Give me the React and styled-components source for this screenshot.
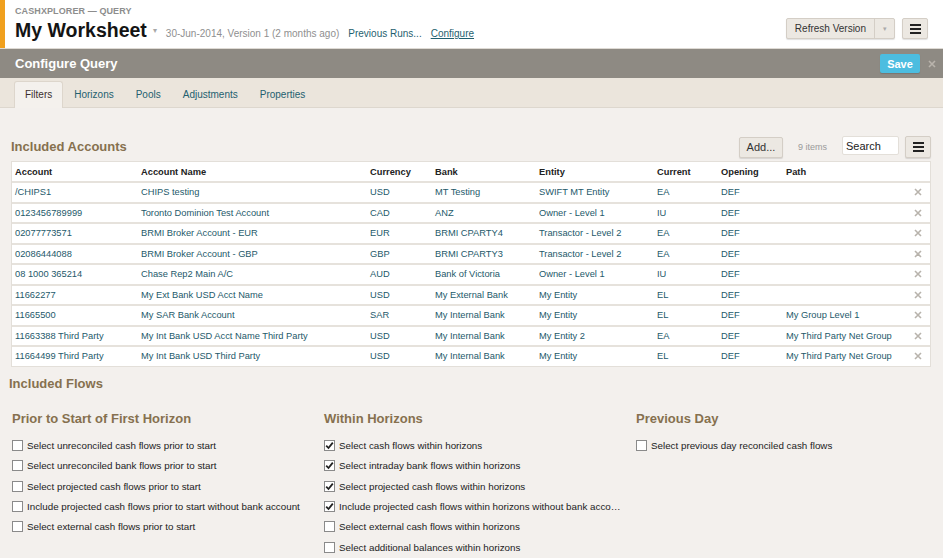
import styled, { createGlobalStyle } from 'styled-components'

const GlobalStyle = createGlobalStyle`
	html, body {
		margin: 0;
		padding: 0;
		background: #f3f0ed;
		font-family: "Liberation Sans", Arial, sans-serif;
		color: #333;
	}
	* { box-sizing: border-box; }
`

const accounts = [
	['/CHIPS1', 'CHIPS testing', 'USD', 'MT Testing', 'SWIFT MT Entity', 'EA', 'DEF', ''],
	['0123456789999', 'Toronto Dominion Test Account', 'CAD', 'ANZ', 'Owner - Level 1', 'IU', 'DEF', ''],
	['02077773571', 'BRMI Broker Account - EUR', 'EUR', 'BRMI CPARTY4', 'Transactor - Level 2', 'EA', 'DEF', ''],
	['02086444088', 'BRMI Broker Account - GBP', 'GBP', 'BRMI CPARTY3', 'Transactor - Level 2', 'EA', 'DEF', ''],
	['08 1000 365214', 'Chase Rep2 Main A/C', 'AUD', 'Bank of Victoria', 'Owner - Level 1', 'IU', 'DEF', ''],
	['11662277', 'My Ext Bank USD Acct Name', 'USD', 'My External Bank', 'My Entity', 'EL', 'DEF', ''],
	['11665500', 'My SAR Bank Account', 'SAR', 'My Internal Bank', 'My Entity', 'EL', 'DEF', 'My Group Level 1'],
	['11663388 Third Party', 'My Int Bank USD Acct Name Third Party', 'USD', 'My Internal Bank', 'My Entity 2', 'EA', 'DEF', 'My Third Party Net Group'],
	['11664499 Third Party', 'My Int Bank USD Third Party', 'USD', 'My Internal Bank', 'My Entity', 'EL', 'DEF', 'My Third Party Net Group'],
]

const columns = ['Account', 'Account Name', 'Currency', 'Bank', 'Entity', 'Current', 'Opening', 'Path']
const colTemplate = '126px 229px 65px 104px 118px 64px 65px 1fr 20px'

const flowGroups = [
	{
		title: 'Prior to Start of First Horizon',
		items: [
			['Select unreconciled cash flows prior to start', false],
			['Select unreconciled bank flows prior to start', false],
			['Select projected cash flows prior to start', false],
			['Include projected cash flows prior to start without bank account', false],
			['Select external cash flows prior to start', false],
		],
	},
	{
		title: 'Within Horizons',
		items: [
			['Select cash flows within horizons', true],
			['Select intraday bank flows within horizons', true],
			['Select projected cash flows within horizons', true],
			['Include projected cash flows within horizons without bank acco…', true],
			['Select external cash flows within horizons', false],
			['Select additional balances within horizons', false],
		],
	},
	{
		title: 'Previous Day',
		items: [['Select previous day reconciled cash flows', false]],
	},
]

const tabs = ['Filters', 'Horizons', 'Pools', 'Adjustments', 'Properties']

function Hamburger () {
	return (
		<svg width='11' height='10' viewBox='0 0 11 10'>
			<rect x='0' y='0' width='11' height='2' fill='#222' />
			<rect x='0' y='4' width='11' height='2' fill='#222' />
			<rect x='0' y='8' width='11' height='2' fill='#222' />
		</svg>
	)
}

function Cross ({ size = 8, color = '#b8b3ac' }) {
	return (
		<svg width={size} height={size} viewBox='0 0 8 8'>
			<path d='M1 1 L7 7 M7 1 L1 7' stroke={color} strokeWidth='1.6' />
		</svg>
	)
}

export default function App () {
	return (
		<>
			<GlobalStyle />
			<Page>
				<Header>
					<Stripe />
					<HeaderMain>
						<AppLabel>CASHXPLORER — QUERY</AppLabel>
						<TitleLine>
							<Title>My Worksheet</Title>
							<Caret>▾</Caret>
							<VersionInfo>30-Jun-2014, Version 1 (2 months ago)</VersionInfo>
							<HeaderLink>Previous Runs...</HeaderLink>
							<HeaderLink $underline>Configure</HeaderLink>
						</TitleLine>
					</HeaderMain>
					<HeaderActions>
						<SplitButton>
							<SplitMain>Refresh Version</SplitMain>
							<SplitCaret>▾</SplitCaret>
						</SplitButton>
						<IconButton><Hamburger /></IconButton>
					</HeaderActions>
				</Header>

				<ConfigBar>
					<ConfigTitle>Configure Query</ConfigTitle>
					<SaveButton>Save</SaveButton>
					<CloseButton><Cross size={8} color='#b9b4ac' /></CloseButton>
				</ConfigBar>

				<TabBar>
					{tabs.map((t, i) => <Tab key={t} $active={i === 0}>{t}</Tab>)}
				</TabBar>

				<Content>
					<SectionHead>
						<SectionTitle>Included Accounts</SectionTitle>
						<Toolbar>
							<ToolButton>Add...</ToolButton>
							<ItemCount>9 items</ItemCount>
							<SearchBox defaultValue='Search' />
							<IconButton $small><Hamburger /></IconButton>
						</Toolbar>
					</SectionHead>

					<Table>
						<HeadRow>
							{columns.map(c => <HeadCell key={c}>{c}</HeadCell>)}
							<HeadCell />
						</HeadRow>
						{accounts.map(row =>
							<Row key={row[0]}>
								{row.map((v, i) => <Cell key={i}>{v}</Cell>)}
								<RemoveCell><Cross size={8} /></RemoveCell>
							</Row>
						)}
					</Table>

					<FlowsTitle>Included Flows</FlowsTitle>
					<FlowGrid>
						{flowGroups.map(g =>
							<FlowGroup key={g.title}>
								<GroupTitle>{g.title}</GroupTitle>
								{g.items.map(([label, checked]) =>
									<CheckRow key={label}>
										<CheckBox>
											{checked &&
												<svg width='9' height='9' viewBox='0 0 9 9'>
													<path d='M1.2 4.6 L3.5 7 L7.8 1.6' fill='none' stroke='#222' strokeWidth='1.8' />
												</svg>
											}
										</CheckBox>
										<CheckLabel>{label}</CheckLabel>
									</CheckRow>
								)}
							</FlowGroup>
						)}
					</FlowGrid>
				</Content>
			</Page>
		</>
	)
}

const Page = styled.div`
	width: 943px;
	height: 558px;
	overflow: hidden;
	background: #f3f0ed;
`

const Header = styled.header`
	height: 49px;
	background: #fff;
	display: flex;
	align-items: stretch;
	border-bottom: 1px solid #dedad4;
`

const Stripe = styled.div`
	width: 5px;
	background: #f0a01e;
`

const HeaderMain = styled.div`
	flex: 1;
	padding: 6px 0 0 10px;
`

const AppLabel = styled.div`
	font-size: 9px;
	font-weight: bold;
	color: #8d8d8d;
	letter-spacing: 0.1px;
	line-height: 10px;
`

const TitleLine = styled.div`
	display: flex;
	align-items: baseline;
	margin-top: 1px;
`

const Title = styled.h1`
	margin: 0;
	font-size: 19.5px;
	line-height: 26px;
	font-weight: bold;
	color: #141414;
`

const Caret = styled.span`
	font-size: 8px;
	color: #a8a8a8;
	margin: 0 9px 0 6px;
	position: relative;
	top: -4px;
`

const VersionInfo = styled.span`
	font-size: 10px;
	color: #8f8f8f;
	margin-right: 9px;
`

const HeaderLink = styled.a`
	font-size: 10px;
	color: #1f5f6f;
	margin-right: 9px;
	text-decoration: ${p => p.$underline ? 'underline' : 'none'};
	cursor: pointer;
`

const HeaderActions = styled.div`
	display: flex;
	align-items: center;
	gap: 7px;
	padding: 0 15px 0 0;
	margin-top: 9px;
`

const buttonBase = `
	background: #ece8e2;
	border: 1px solid #d4cec6;
	border-radius: 2px;
	box-shadow: 0 1px 1px rgba(0,0,0,0.12);
	font-family: "Liberation Sans", Arial, sans-serif;
	color: #333;
`

const SplitButton = styled.div`
	${buttonBase}
	display: flex;
	height: 21px;
	font-size: 10px;
`

const SplitMain = styled.span`
	display: flex;
	align-items: center;
	padding: 0 8px;
	border-right: 1px solid #d4cec6;
`

const SplitCaret = styled.span`
	width: 19px;
	display: flex;
	align-items: center;
	justify-content: center;
	font-size: 7px;
	color: #aaa;
`

const IconButton = styled.div`
	${buttonBase}
	width: 26px;
	height: ${p => p.$small ? '22px' : '21px'};
	display: flex;
	align-items: center;
	justify-content: center;
`

const ConfigBar = styled.div`
	height: 29px;
	background: #8e8a83;
	display: flex;
	align-items: center;
	padding: 0 0 0 15px;
`

const ConfigTitle = styled.h2`
	flex: 1;
	margin: 0;
	font-size: 13px;
	font-weight: bold;
	color: #fff;
`

const SaveButton = styled.div`
	width: 40px;
	height: 19px;
	background: #4cbde0;
	border-radius: 2px;
	color: #fff;
	font-size: 11px;
	font-weight: bold;
	display: flex;
	align-items: center;
	justify-content: center;
	box-shadow: 0 1px 1px rgba(0,0,0,0.15);
`

const CloseButton = styled.div`
	width: 23px;
	display: flex;
	justify-content: center;
`

const TabBar = styled.nav`
	height: 30px;
	background: #ebe5dc;
	border-bottom: 1px solid #ddd7ce;
	display: flex;
	align-items: flex-end;
	padding-left: 14px;
`

const Tab = styled.div`
	height: 27px;
	padding: 0 10px 1px;
	display: flex;
	align-items: center;
	font-size: 10px;
	color: ${p => p.$active ? '#3b2f2f' : '#23606f'};
	background: ${p => p.$active ? '#f4f1ed' : 'transparent'};
	border: 1px solid ${p => p.$active ? '#ddd6cc' : 'transparent'};
	border-bottom: none;
	border-radius: 3px 3px 0 0;
	margin-bottom: -1px;
`

const Content = styled.main`
	padding: 0 12px 0 11px;
`

const SectionHead = styled.div`
	display: flex;
	align-items: center;
	justify-content: space-between;
	margin-top: 28px;
	height: 22px;
`

const SectionTitle = styled.h3`
	margin: 0;
	font-size: 13px;
	font-weight: bold;
	color: #86704f;
	position: relative;
	top: -1px;
`

const Toolbar = styled.div`
	display: flex;
	align-items: center;
`

const ToolButton = styled.div`
	${buttonBase}
	font-size: 11px;
	height: 21px;
	width: 44px;
	display: flex;
	align-items: center;
	justify-content: center;
`

const ItemCount = styled.span`
	font-size: 9px;
	color: #9a9a9a;
	margin: 0 15px 0 15px;
`

const SearchBox = styled.input`
	width: 57px;
	height: 19px;
	border: 1px solid #e3dfd9;
	background: #fff;
	font-family: "Liberation Sans", Arial, sans-serif;
	font-size: 11px;
	color: #222;
	padding: 0 3px;
	margin: -3px 6px 0 0;
	outline: none;
	border-radius: 2px;
`

const Table = styled.div`
	margin-top: 3px;
	border: 1px solid #e3dfd9;
	background: #e6e2dc;
`

const HeadRow = styled.div`
	display: grid;
	grid-template-columns: ${colTemplate};
	height: 19px;
	background: #fff;
	margin-bottom: 2px;
	align-items: center;
`

const HeadCell = styled.div`
	font-size: 9.3px;
	font-weight: bold;
	color: #222;
	padding-left: 3px;
	white-space: nowrap;
`

const Row = styled.div`
	display: grid;
	grid-template-columns: ${colTemplate};
	height: 18.5px;
	background: #fff;
	margin-bottom: 2px;
	align-items: center;
	&:last-child { margin-bottom: 0; }
`

const Cell = styled.div`
	font-size: 9.3px;
	color: #24596a;
	padding-left: 3px;
	white-space: nowrap;
	overflow: hidden;
`

const RemoveCell = styled.div`
	display: flex;
	justify-content: center;
	padding-right: 4px;
`

const FlowsTitle = styled.h3`
	margin: 9px 0 0 -2px;
	font-size: 13px;
	font-weight: bold;
	color: #86704f;
`

const FlowGrid = styled.div`
	display: grid;
	grid-template-columns: 312px 312px 1fr;
	margin-top: 20px;
	padding-left: 1px;
`

const FlowGroup = styled.section``

const GroupTitle = styled.h4`
	margin: 0 0 9px;
	font-size: 13px;
	font-weight: bold;
	color: #86704f;
	line-height: 16px;
`

const CheckRow = styled.div`
	display: flex;
	align-items: center;
	height: 20.3px;
`

const CheckBox = styled.span`
	width: 11px;
	height: 11px;
	border: 1px solid #8a8a8a;
	background: #fff;
	margin-right: 4px;
	display: flex;
	align-items: center;
	justify-content: center;
	flex-shrink: 0;
`

const CheckLabel = styled.span`
	font-size: 9.8px;
	color: #222;
	white-space: nowrap;
`
